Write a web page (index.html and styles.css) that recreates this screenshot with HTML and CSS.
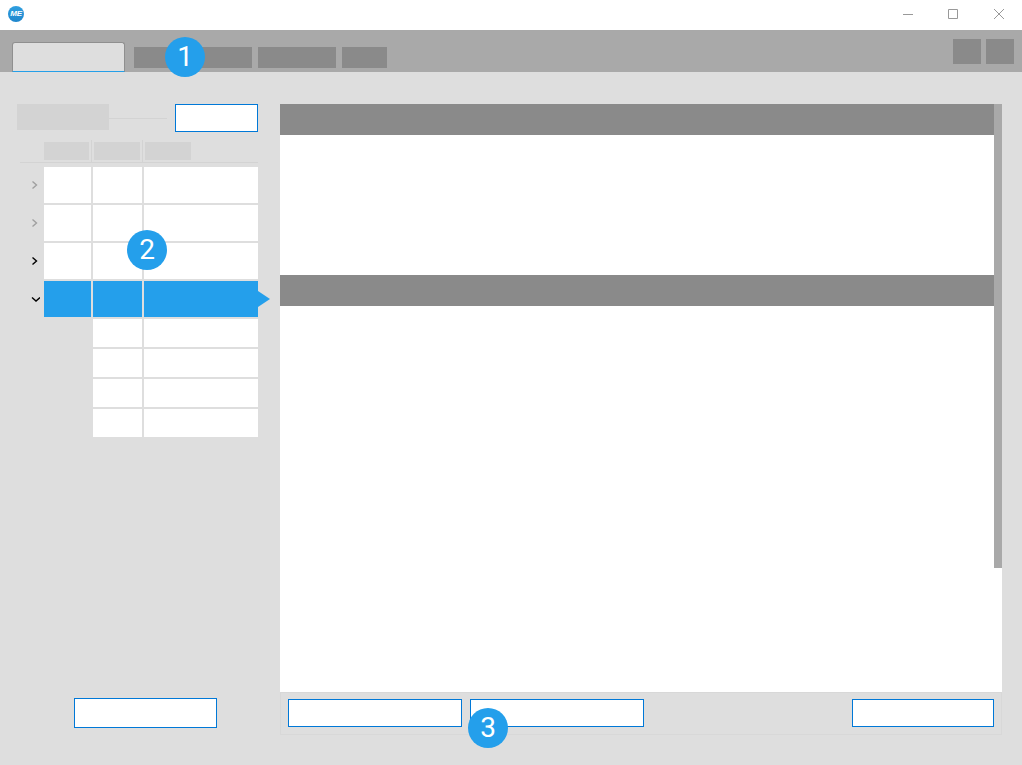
FILE: index.html
```html
<!DOCTYPE html>
<html lang="en">

<head>
  <meta charset="UTF-8">
  <meta name="viewport" content="width=device-width, initial-scale=1.0">
  <title>ME</title>
  <link rel="stylesheet" href="styles.css">
</head>

<body>
  <div class="title-bar">
    <div class="logo">ME</div>
    <div class="window-controls">
      <div class="window-btn">
        <svg width="10" height="10" viewBox="0 0 10 10"><path d="M0 5.5H10" /></svg>
      </div>
      <div class="window-btn">
        <svg width="10" height="10" viewBox="0 0 10 10"><path d="M0.5 0.5H9.5V9.5H0.5Z" /></svg>
      </div>
      <div class="window-btn">
        <svg width="10" height="10" viewBox="0 0 10 10"><path d="M0 0L10 10M10 0L0 10" /></svg>
      </div>
    </div>
  </div>

  <div class="toolbar">
    <div class="tab-active"></div>
    <div class="tab tab-1"></div>
    <div class="tab tab-2"></div>
    <div class="tab tab-3"></div>
    <div class="tab tab-4"></div>
    <div class="tools">
      <div class="tool"></div>
      <div class="tool"></div>
    </div>
  </div>

  <div class="main-container">
    <div class="side">
      <div class="filter">
        <div class="filter-label"></div>
        <div class="filter-line"></div>
        <div class="field filter-input"></div>
      </div>

      <div class="tree-head">
        <div class="head-cell"></div>
        <div class="head-sep"></div>
        <div class="head-cell wide"></div>
        <div class="head-sep"></div>
        <div class="head-cell wide"></div>
      </div>

      <div class="tree">
        <div class="row">
          <svg class="chevron muted" width="10" height="10" viewBox="0 0 10 10"><path d="M2.5 1.5L6.5 5L2.5 8.5" /></svg>
          <div class="cell"></div>
          <div class="cell"></div>
          <div class="cell"></div>
        </div>
        <div class="row">
          <svg class="chevron muted" width="10" height="10" viewBox="0 0 10 10"><path d="M2.5 1.5L6.5 5L2.5 8.5" /></svg>
          <div class="cell"></div>
          <div class="cell"></div>
          <div class="cell"></div>
        </div>
        <div class="row">
          <svg class="chevron" width="10" height="10" viewBox="0 0 10 10"><path d="M2.5 1.5L6.5 5L2.5 8.5" /></svg>
          <div class="cell"></div>
          <div class="cell"></div>
          <div class="cell"></div>
        </div>
        <div class="row selected">
          <svg class="chevron" width="10" height="10" viewBox="0 0 10 10"><path d="M2 3.5L6 7L10 3.5" /></svg>
          <div class="cell"></div>
          <div class="cell"></div>
          <div class="cell"></div>
        </div>
        <div class="row sub-row">
          <div class="cell"></div>
          <div class="cell"></div>
        </div>
        <div class="row sub-row">
          <div class="cell"></div>
          <div class="cell"></div>
        </div>
        <div class="row sub-row">
          <div class="cell"></div>
          <div class="cell"></div>
        </div>
        <div class="row sub-row">
          <div class="cell"></div>
          <div class="cell"></div>
        </div>
      </div>

      <div class="field side-button"></div>
    </div>

    <div class="content">
      <div class="panel">
        <div class="panel-body">
          <div class="panel-heading"></div>
          <div class="panel-section"></div>
          <div class="panel-heading"></div>
        </div>
        <div class="scroll-track">
          <div class="scroll-thumb"></div>
        </div>
      </div>
      <div class="actions">
        <div class="field action-wide"></div>
        <div class="field action-wide"></div>
        <div class="field action-last"></div>
      </div>
    </div>
  </div>

  <!-- callout numbers sit on top of the screen -->
  <div class="badge badge-1">1</div>
  <div class="badge badge-2">2</div>
  <div class="badge badge-3">3</div>
</body>

</html>
```

FILE: styles.css
```css
body {
  width: 1022px;
  height: 765px;
  margin: 0;
  padding: 0;
  display: flex;
  flex-direction: column;
  overflow: hidden;
  background-color: #dedede;
  font-family: "Roboto", "Liberation Sans", sans-serif;
}

.title-bar {
  height: 30px;
  padding: 0 0 2px 8px;
  box-sizing: border-box;
  display: flex;
  align-items: center;
  background-color: #ffffff;
}

.logo {
  width: 16px;
  height: 16px;
  border-radius: 50%;
  background: linear-gradient(#2f9fe0, #1f86cc);
  color: #ffffff;
  font-family: "Liberation Sans", sans-serif;
  font-size: 8px;
  font-weight: bold;
  font-style: italic;
  line-height: 16px;
  text-align: center;
  letter-spacing: -0.3px;
}

.window-controls {
  margin-left: auto;
  display: flex;
}

.window-btn {
  width: 46px;
  height: 28px;
  display: flex;
  align-items: center;
  justify-content: center;
}

.window-btn svg {
  fill: none;
  stroke: #999999;
  stroke-width: 1;
}

.window-btn:first-child svg {
  margin-left: 2px;
}

.toolbar {
  height: 42px;
  padding: 0 8px 0 12px;
  display: flex;
  align-items: flex-end;
  box-sizing: border-box;
  background-color: #a9a9a9;
}

.tab-active {
  width: 113px;
  height: 30px;
  margin-right: 9px;
  box-sizing: border-box;
  border: 1px solid #8f8f8f;
  border-bottom: 1px solid #259fe8;
  border-radius: 3px 3px 0 0;
  background-color: #dedede;
}

.tab {
  height: 21px;
  margin-right: 6px;
  margin-bottom: 4px;
  background-color: #8a8a8a;
}

.tab-1 {
  width: 53px;
}

.tab-2 {
  width: 59px;
}

.tab-3 {
  width: 78px;
}

.tab-4 {
  width: 45px;
}

.tools {
  margin-left: auto;
  align-self: flex-start;
  margin-top: 9px;
  display: flex;
  gap: 5px;
}

.tool {
  width: 28px;
  height: 25px;
  background-color: #8a8a8a;
}

.main-container {
  flex: 1;
  padding: 32px 20px 30px 0;
  display: flex;
}

.field {
  box-sizing: border-box;
  border: 1px solid #0078d7;
  background-color: #ffffff;
}

/* left side */
.side {
  width: 280px;
  display: flex;
  flex-direction: column;
}

.filter {
  height: 28px;
  padding-left: 17px;
  display: flex;
  align-items: flex-start;
}

.filter-label {
  width: 92px;
  height: 26px;
  background-color: #d3d3d3;
}

.filter-line {
  width: 58px;
  height: 1px;
  margin-top: 14px;
  background-color: #d3d3d3;
}

.filter-input {
  width: 83px;
  height: 28px;
  margin-left: 8px;
}

.tree-head {
  width: 214px;
  height: 22px;
  margin: 8px 0 0 20px;
  padding-left: 24px;
  display: flex;
  border-bottom: 1px solid #d3d3d3;
}

.head-cell {
  width: 45px;
  height: 18px;
  margin-top: 2px;
  background-color: #d3d3d3;
}

.head-cell.wide {
  width: 46px;
}

.head-sep {
  width: 1px;
  margin: 0 2px;
  background-color: #d3d3d3;
}

.tree {
  margin: 4px 0 0 20px;
  width: 238px;
  display: flex;
  flex-direction: column;
  gap: 2px;
}

.row {
  position: relative;
  height: 36px;
  display: grid;
  grid-template-columns: 22px 47px 49px 114px;
  column-gap: 2px;
  align-items: stretch;
}

.sub-row {
  height: 28px;
}

.sub-row .cell:first-child {
  grid-column: 3;
}

.cell {
  background-color: #ffffff;
}

.selected .cell {
  background-color: #249feb;
}

.selected::after {
  content: "";
  position: absolute;
  left: 238px;
  top: 10px;
  border-top: 8px solid transparent;
  border-bottom: 8px solid transparent;
  border-left: 12px solid #249feb;
}

.chevron {
  align-self: center;
  margin-left: 10px;
  fill: none;
  stroke: #000000;
  stroke-width: 1.4;
}

.chevron.muted {
  stroke: #a0a0a0;
}

.side-button {
  width: 143px;
  height: 30px;
  margin: auto 0 7px 74px;
}

/* right side */
.content {
  flex: 1;
  display: flex;
  flex-direction: column;
}

.panel {
  flex: 1;
  display: flex;
  background-color: #ffffff;
}

.panel-body {
  flex: 1;
}

.panel-heading {
  height: 31px;
  background-color: #8a8a8a;
}

.panel-section {
  height: 140px;
}

.scroll-track {
  width: 8px;
}

.scroll-thumb {
  height: 464px;
  background-color: #a9a9a9;
}

.actions {
  height: 43px;
  padding: 6px 7px 0 7px;
  display: flex;
  gap: 8px;
  box-sizing: border-box;
  border: 1px solid #d8d8d8;
}

.action-wide {
  width: 174px;
  height: 28px;
}

.action-last {
  width: 142px;
  height: 28px;
  margin-left: auto;
}

/* callouts */
.badge {
  position: absolute;
  width: 40px;
  height: 40px;
  border-radius: 50%;
  background-color: #249feb;
  color: #ffffff;
  font-size: 28px;
  font-weight: 400;
  line-height: 40px;
  text-align: center;
}

.badge-1 {
  left: 165px;
  top: 37px;
}

.badge-2 {
  left: 127px;
  top: 230px;
}

.badge-3 {
  left: 468px;
  top: 708px;
}
```
